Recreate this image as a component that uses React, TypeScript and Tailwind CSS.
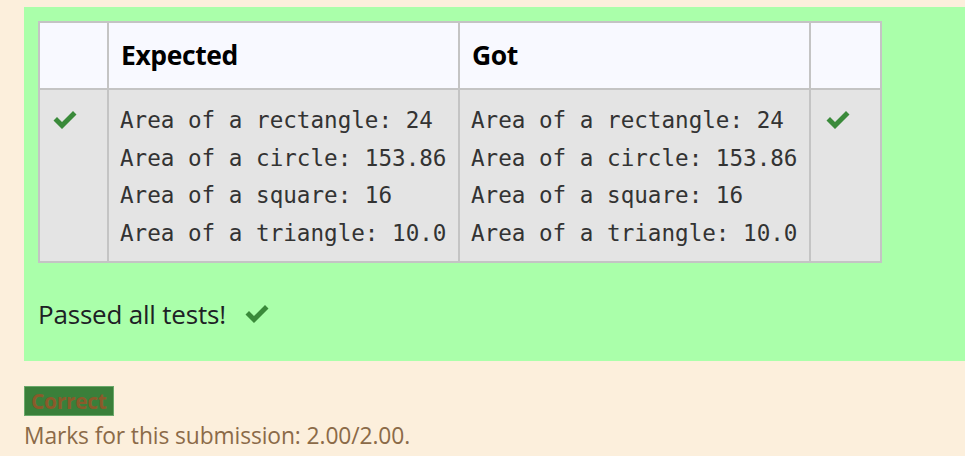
const lines = [
  'Area of a rectangle: 24',
  'Area of a circle: 153.86',
  'Area of a square: 16',
  'Area of a triangle: 10.0',
];

function Check({ className }: { className?: string }) {
  return (
    <svg viewBox="0 0 24 18" className={className} fill="#3a8a3a">
      <path d="M0.5 9.5 L4 6 L9 11 L20 0 L23.5 3.5 L9 18 Z" />
    </svg>
  );
}

export default function App() {
  return (
    <div className="min-h-[456px] w-[965px] bg-[#fcefdc] pt-[7px] font-['Open_Sans','Lato',sans-serif]">
      {/* Outcome box */}
      <div className="ml-[24px] h-[354px] bg-[#aaffaa] pl-[14px] pt-[14px]">
        <table className="border-collapse">
          <thead>
            <tr className="h-[67px] bg-[#f8f9ff]">
              <th className="w-[69px] border-2 border-[#c4c4c4]"></th>
              <th className="w-[351px] border-2 border-[#c4c4c4] pl-[12px] text-left text-[26.5px] font-bold tracking-[-0.4px] text-black">
                Expected
              </th>
              <th className="w-[351px] border-2 border-[#c4c4c4] pl-[12px] text-left text-[26.5px] font-bold tracking-[-0.4px] text-black">
                Got
              </th>
              <th className="w-[71px] border-2 border-[#c4c4c4]"></th>
            </tr>
          </thead>
          <tbody>
            <tr className="bg-[#e4e4e4] align-top">
              <td className="border-2 border-[#c4c4c4] pl-[13px] pt-[21px]">
                <Check className="h-[18px] w-[24px]" />
              </td>
              <td className="border-2 border-[#c4c4c4] pb-[8px] pl-[11px] pt-[12px] font-['DejaVu_Sans_Mono',monospace] text-[22.6px] leading-[37.7px] text-[#333] whitespace-pre">
                {lines.join('\n')}
              </td>
              <td className="border-2 border-[#c4c4c4] pb-[8px] pl-[11px] pt-[12px] font-['DejaVu_Sans_Mono',monospace] text-[22.6px] leading-[37.7px] text-[#333] whitespace-pre">
                {lines.join('\n')}
              </td>
              <td className="border-2 border-[#c4c4c4] pl-[15px] pt-[21px]">
                <Check className="h-[18px] w-[24px]" />
              </td>
            </tr>
          </tbody>
        </table>
        <div className="mt-[34px] flex items-center gap-[19px] text-[26px] leading-[34px] tracking-[-0.2px] text-[#1d2125]">
          <span>Passed all tests!</span>
          <Check className="h-[18px] w-[24px]" />
        </div>
      </div>

      {/* Grade */}
      <div className="ml-[24px] mt-[25px]">
        <span className="inline-block h-[30px] border border-[#6aa86a] bg-[#3a7f3a] px-[6px] text-[21px] font-bold leading-[28px] tracking-[-0.3px] text-[#8a5a2a]">
          Correct
        </span>
        <div className="mt-[6px] text-[22.8px] leading-[28px] tracking-[-0.1px] text-[#8b6a48]">
          Marks for this submission: 2.00/2.00.
        </div>
      </div>
    </div>
  );
}
